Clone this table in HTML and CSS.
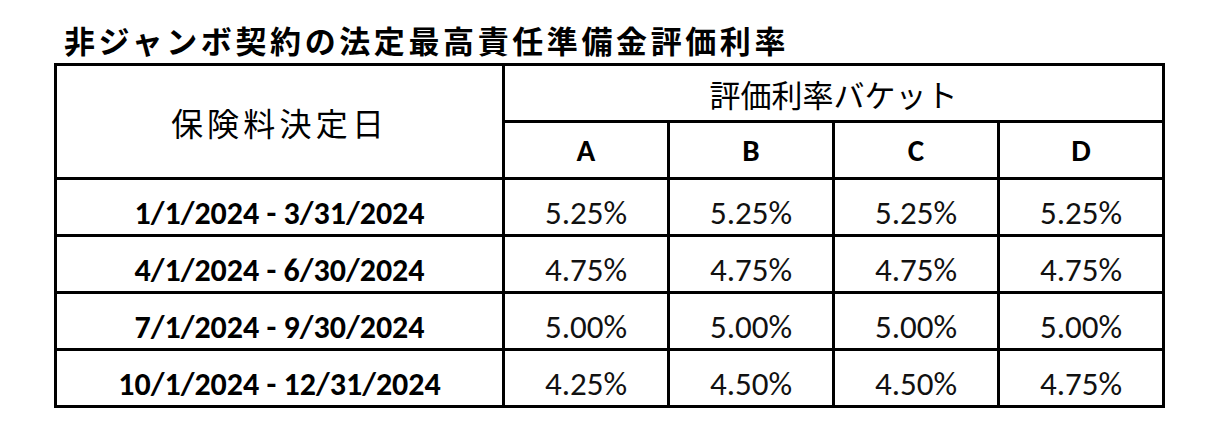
FILE: index.html
```html
<!DOCTYPE html>
<html lang="ja">
<head>
<meta charset="utf-8">
<title>非ジャンボ契約の法定最高責任準備金評価利率</title>
<link rel="stylesheet" href="styles.css">
</head>
<body>
<div class="page">
  <h1 class="title">非ジャンボ契約の法定最高責任準備金評価利率</h1>
  <table class="rates">
    <colgroup>
      <col class="col-date">
      <col class="col-rate">
      <col class="col-rate">
      <col class="col-rate">
      <col class="col-rate">
    </colgroup>
    <thead>
      <tr>
        <th rowspan="2" class="head-date">保険料決定日</th>
        <th colspan="4" class="head-bucket">評価利率バケット</th>
      </tr>
      <tr>
        <th class="head-letter">A</th>
        <th class="head-letter">B</th>
        <th class="head-letter">C</th>
        <th class="head-letter">D</th>
      </tr>
    </thead>
    <tbody>
      <tr>
        <td class="date">1/1/2024 - 3/31/2024</td>
        <td class="rate">5.25%</td><td class="rate">5.25%</td><td class="rate">5.25%</td><td class="rate">5.25%</td>
      </tr>
      <tr>
        <td class="date">4/1/2024 - 6/30/2024</td>
        <td class="rate">4.75%</td><td class="rate">4.75%</td><td class="rate">4.75%</td><td class="rate">4.75%</td>
      </tr>
      <tr>
        <td class="date">7/1/2024 - 9/30/2024</td>
        <td class="rate">5.00%</td><td class="rate">5.00%</td><td class="rate">5.00%</td><td class="rate">5.00%</td>
      </tr>
      <tr>
        <td class="date">10/1/2024 - 12/31/2024</td>
        <td class="rate">4.25%</td><td class="rate">4.50%</td><td class="rate">4.50%</td><td class="rate">4.75%</td>
      </tr>
    </tbody>
  </table>
</div>
</body>
</html>
```

FILE: styles.css
```css
html, body {
  margin: 0;
  padding: 0;
  background: #ffffff;
}

.page {
  padding: 0 0 0 54px;
  display: flex;
  flex-direction: column;
}

.title {
  margin: 0;
  height: 63px;
  padding-left: 10px;
  box-sizing: border-box;
  display: flex;
  align-items: flex-end;
  padding-bottom: 8px;
  font-family: "Noto Sans CJK JP", sans-serif;
  font-weight: 700;
  font-size: 31px;
  letter-spacing: 3.6px;
  line-height: 1;
  color: #000;
}

.rates {
  border-collapse: collapse;
  table-layout: fixed;
  width: 1111px;
  border: 3px solid #000;
  color: #000;
}

.col-date { width: 448px; }
.col-rate { width: 165px; }

.rates th,
.rates td {
  border: 3px solid #000;
  padding: 0;
  text-align: center;
  vertical-align: middle;
  height: 54px;
}

.head-date {
  font-family: "Noto Sans CJK JP", sans-serif;
  font-weight: 400;
  font-size: 32px;
  letter-spacing: 4.2px;
  padding: 0 0 8px 4px;
}

.head-bucket {
  font-family: "Noto Sans CJK JP", sans-serif;
  font-weight: 400;
  font-size: 31px;
}

.head-letter {
  font-family: "Carlito", "Liberation Sans", sans-serif;
  font-weight: 700;
  font-size: 31px;
}

.rates .date,
.rates .rate {
  height: 41px;
  padding-top: 13px;
  line-height: 1;
}

.date {
  font-family: "Carlito", "Liberation Sans", sans-serif;
  font-weight: 700;
  font-size: 32px;
}

.rate {
  font-family: "Carlito", "Liberation Sans", sans-serif;
  font-weight: 400;
  font-size: 33px;
  color: #111;
}
```
